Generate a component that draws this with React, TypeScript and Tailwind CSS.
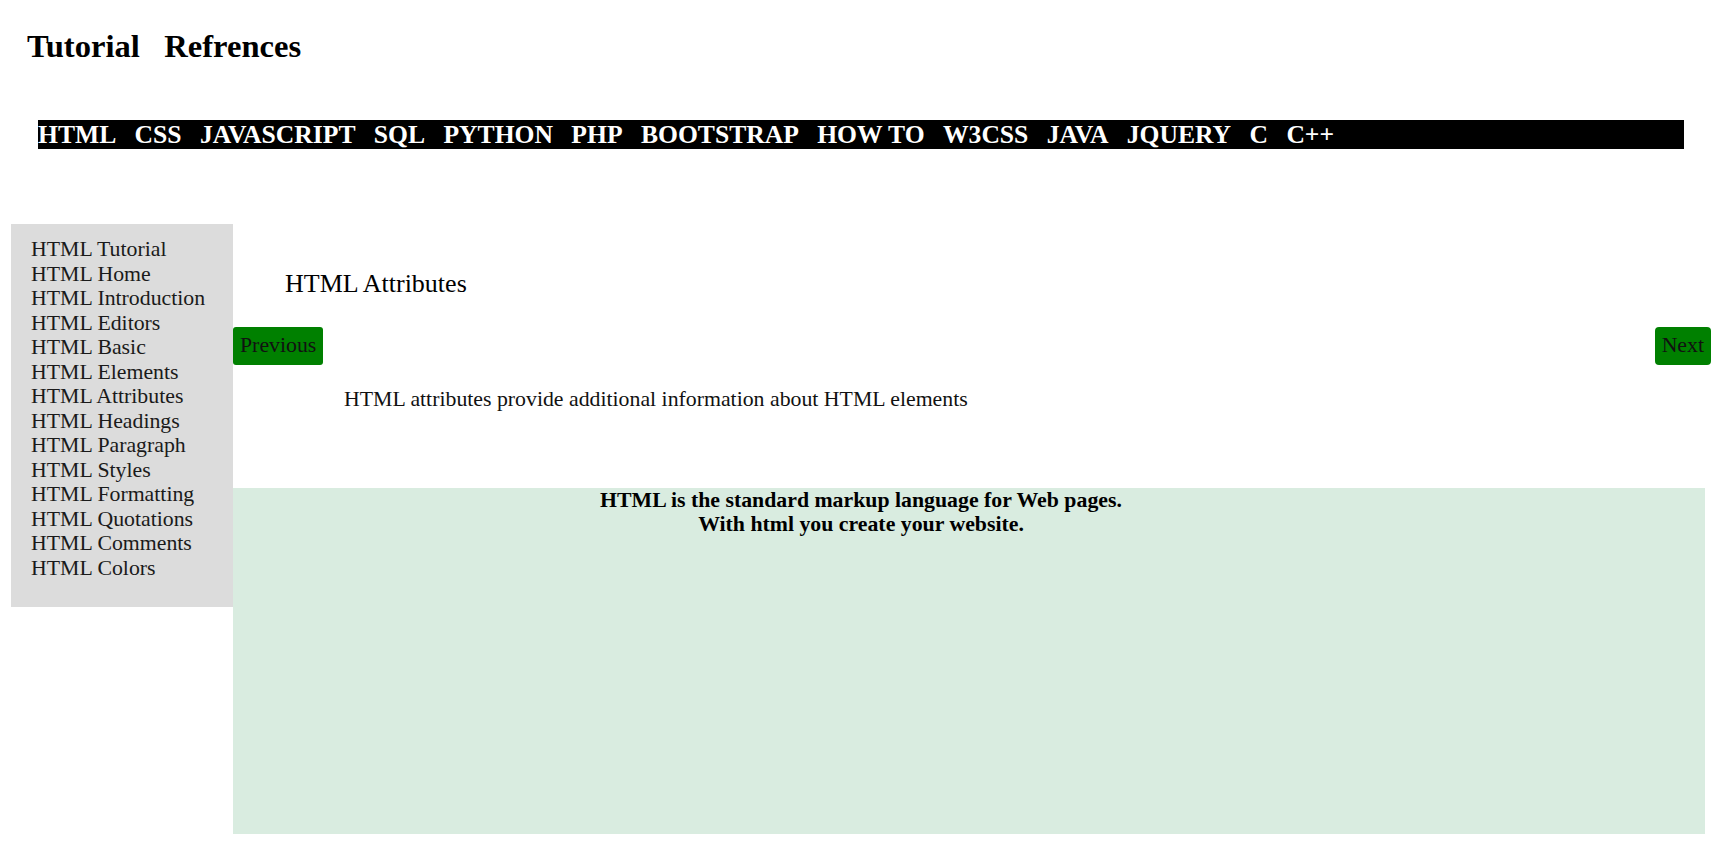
import React from 'react';

const navLinks = ['HTML', 'CSS', 'JAVASCRIPT', 'SQL', 'PYTHON', 'PHP', 'BOOTSTRAP', 'HOW TO', 'W3CSS', 'JAVA', 'JQUERY', 'C', 'C++'];

const sideLinks = [
  'HTML Tutorial',
  'HTML Home',
  'HTML Introduction',
  'HTML Editors',
  'HTML Basic',
  'HTML Elements',
  'HTML Attributes',
  'HTML Headings',
  'HTML Paragraph',
  'HTML Styles',
  'HTML Formatting',
  'HTML Quotations',
  'HTML Comments',
  'HTML Colors',
];

const App: React.FC = () => {
  return (
    <div className="w-full min-h-[863px] bg-white text-black font-['Liberation_Serif','Times_New_Roman',serif]">
      {/* header */}
      <h1 className="pl-[27px] pt-[27px] text-[32.6px] leading-[38px] font-bold">
        Tutorial&nbsp;&nbsp;&nbsp;Refrences
      </h1>

      <nav className="mx-[38px] mt-[55px] h-[29px] bg-black flex items-center gap-[18.4px] text-white text-[25.6px] font-bold leading-[29px]">
        {navLinks.map(link => (
          <a key={link} href="#" className="whitespace-nowrap">
            {link}
          </a>
        ))}
      </nav>

      <div className="flex mt-[75px] pl-[11px] pr-[11px]">
        {/* sidebar */}
        <aside className="w-[222px] h-[383px] shrink-0 bg-[#dcdcdc] pt-[13px] pl-[20px]">
          {sideLinks.map(item => (
            <a key={item} href="#" className="block text-[21.8px] leading-[24.5px] text-[#1a1a1a] whitespace-nowrap">
              {item}
            </a>
          ))}
        </aside>

        {/* main */}
        <main className="flex-1 pt-[45px]">
          <h2 className="pl-[52px] text-[26px] leading-[30px]">HTML Attributes</h2>

          <div className="flex justify-between mt-[28px]">
            <button className="h-[38px] px-[7px] bg-[#008000] rounded-[3px] text-[21.8px] text-[#111] leading-none">
              Previous
            </button>
            <button className="h-[38px] px-[7px] bg-[#008000] rounded-[4px] text-[21.8px] text-[#111] leading-none">
              Next
            </button>
          </div>

          <p className="pl-[111px] mt-[22px] text-[21.8px] leading-[24px] text-[#111]">
            HTML attributes provide additional information about HTML elements
          </p>

          <section className="mt-[77px] w-[1472px] h-[346px] bg-[#d9ece0]">
            <div className="w-[1256px] text-center font-bold text-[21.8px] leading-[24px]">
              HTML is the standard markup language for Web pages.
              <br />
              With html you create your website.
            </div>
          </section>
        </main>
      </div>
    </div>
  );
};

export default App;
